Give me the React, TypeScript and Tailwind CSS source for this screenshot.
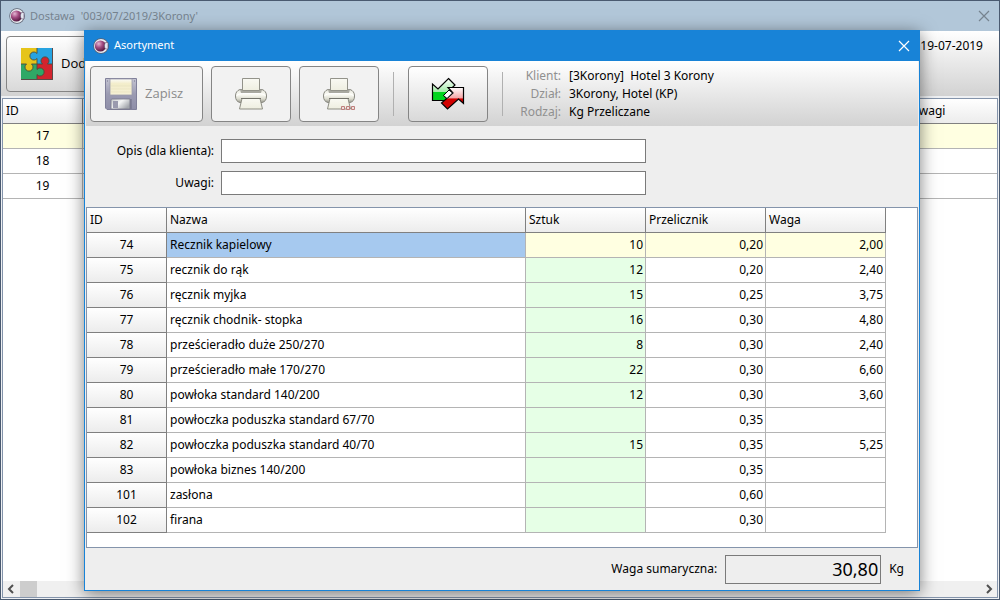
import { useState } from 'react'

interface Item {
  id: number
  name: string
  pieces: string
  factor: string
  weight: string
}

const ITEMS: Item[] = [
  { id: 74, name: 'Recznik kapielowy', pieces: '10', factor: '0,20', weight: '2,00' },
  { id: 75, name: 'recznik do rąk', pieces: '12', factor: '0,20', weight: '2,40' },
  { id: 76, name: 'ręcznik myjka', pieces: '15', factor: '0,25', weight: '3,75' },
  { id: 77, name: 'ręcznik chodnik- stopka', pieces: '16', factor: '0,30', weight: '4,80' },
  { id: 78, name: 'prześcieradło duże 250/270', pieces: '8', factor: '0,30', weight: '2,40' },
  { id: 79, name: 'prześcieradło małe 170/270', pieces: '22', factor: '0,30', weight: '6,60' },
  { id: 80, name: 'powłoka standard 140/200', pieces: '12', factor: '0,30', weight: '3,60' },
  { id: 81, name: 'powłoczka poduszka standard 67/70', pieces: '', factor: '0,35', weight: '' },
  { id: 82, name: 'powłoczka poduszka standard 40/70', pieces: '15', factor: '0,35', weight: '5,25' },
  { id: 83, name: 'powłoka biznes 140/200', pieces: '', factor: '0,35', weight: '' },
  { id: 101, name: 'zasłona', pieces: '', factor: '0,60', weight: '' },
  { id: 102, name: 'firana', pieces: '', factor: '0,30', weight: '' },
]

const DELIVERIES = [17, 18, 19]

const INFO = [
  ['Klient:', '[3Korony]  Hotel 3 Korony'],
  ['Dział:', '3Korony, Hotel (KP)'],
  ['Rodzaj:', 'Kg Przeliczane'],
]

const HEAD = 'h-[25px] border-r border-b border-[#808080] bg-linear-to-b from-white to-[#ececec] p-0 pl-[3px] text-left font-normal'
const ID_CELL = 'h-[25px] border-r border-b border-[#808080] bg-linear-to-b from-white to-[#ececec] p-0 text-center font-normal'
const CELL = 'h-[25px] border-r border-b border-[#b4b4b4] p-0'

function AppLogo() {
  return (
    <svg width="16" height="16" viewBox="0 0 16 16" aria-hidden="true">
      <defs>
        <radialGradient id="ball" cx="0.35" cy="0.3" r="0.75">
          <stop offset="0" stopColor="#e3b6d2" />
          <stop offset="0.45" stopColor="#a44d83" />
          <stop offset="1" stopColor="#4d1238" />
        </radialGradient>
      </defs>
      <circle cx="8" cy="8" r="7.7" fill="#5a5f6e" />
      <circle cx="8" cy="8" r="7" fill="#e9edf2" />
      <circle cx="7.4" cy="8" r="5.6" fill="url(#ball)" />
      <path d="M12.500 4.500h2.500v6.500h-2.500c-1.500-2-1.500-4.500 0-6.500z" fill="#e4e6f0" stroke="#5c4b68" strokeWidth="0.6" />
    </svg>
  )
}

function PuzzleIcon() {
  return (
    <svg width="32" height="32" viewBox="0 0 32 32" aria-hidden="true">
      <rect width="32" height="32" fill="#27a3e0" />
      <path d="M0 0H16V5.500A4 4 0 1 0 16 10.500V16H0z" fill="#e6c419" />
      <path d="M16 16H21.500A4 4 0 1 1 26.500 16H32V32H16z" fill="#d3242e" />
      <path d="M0 16H16V21.500A4 4 0 1 1 16 26.500V32H0z" fill="#2fa866" />
      <path d="M5.500 16A4 4 0 1 0 10.500 16z" fill="#e6c419" />
      <path
        d="M16 0V5.500A4 4 0 1 0 16 10.500V21.500A4 4 0 1 1 16 26.500V32M0 16H5.500A4 4 0 1 0 10.500 16H21.500A4 4 0 1 1 26.500 16H32"
        fill="none"
        stroke="#4b4a3c"
        strokeWidth="0.9"
      />
      <path d="M31.500 0V31.500H0" fill="none" stroke="#5b4a48" />
    </svg>
  )
}

function FloppyIcon() {
  return (
    <svg width="32" height="32" viewBox="0 0 32 32" aria-hidden="true">
      <defs>
        <linearGradient id="disk" x1="0" y1="0" x2="0" y2="1">
          <stop offset="0" stopColor="#c4c4d2" />
          <stop offset="0.5" stopColor="#9b9bb2" />
          <stop offset="1" stopColor="#8e8ea8" />
        </linearGradient>
        <linearGradient id="label" x1="0" y1="0" x2="0" y2="1">
          <stop offset="0" stopColor="#fbfbf8" />
          <stop offset="0.3" stopColor="#f3edca" />
          <stop offset="1" stopColor="#f6f1d6" />
        </linearGradient>
        <linearGradient id="shutter" x1="0" y1="0" x2="1" y2="0.6">
          <stop offset="0" stopColor="#c4c6c8" />
          <stop offset="0.5" stopColor="#f4f5f5" />
          <stop offset="1" stopColor="#a3a6ac" />
        </linearGradient>
      </defs>
      <path d="M.5.5h31v31H2L.5 30z" fill="url(#disk)" stroke="#80809a" />
      <rect x="5" y="1" width="22" height="16" fill="url(#label)" stroke="#9b9baa" strokeWidth="0.8" />
      <path d="M6 8h20M6 11h20M6 14h20" stroke="#e6dfbd" strokeWidth="0.6" />
      <path d="M2 3h1M29 3h1" stroke="#74748c" />
      <path d="M6 31V22q0-1 1-1h18v10z" fill="url(#shutter)" stroke="#777789" strokeWidth="0.8" />
      <rect x="8" y="23" width="5" height="7" fill="#9a9aae" />
      <path d="M26 21v10" stroke="#6f6f85" />
    </svg>
  )
}

function PrinterIcon({ dots = false }: { dots?: boolean }) {
  return (
    <svg width="32" height="32" viewBox="0 0 32 32" aria-hidden="true">
      <defs>
        <linearGradient id="printer" x1="0" y1="0" x2="0" y2="1">
          <stop offset="0" stopColor="#e6e6de" />
          <stop offset="0.4" stopColor="#fbfbf4" />
          <stop offset="0.7" stopColor="#deded2" />
          <stop offset="1" stopColor="#9c9c92" />
        </linearGradient>
        <linearGradient id="paper" x1="0" y1="0" x2="0" y2="1">
          <stop offset="0" stopColor="#f9f9f3" />
          <stop offset="1" stopColor="#eeeee0" />
        </linearGradient>
      </defs>
      <path d="M5 11.500H27Q31.500 13 31.500 18Q31.500 23.500 27 24.500H5Q.5 23.500 .5 18Q.5 13 5 11.500z" fill="url(#printer)" stroke="#87877f" />
      <path d="M5 11.500h22l-1 3.500H6z" fill="#a9a9a1" />
      <path d="M7.500.5h17v12h-17z" fill="url(#paper)" stroke="#93938a" />
      <path d="M1.500 17.500q3-2 6-2h17q3 0 6 2" fill="none" stroke="#fff" />
      <path d="M7 20.500h18l2.500 10.500h-23z" fill="url(#paper)" stroke="#8f8f85" />
      <path d="M6 20.500h20" stroke="#74746c" />
      {dots && (
        <path d="M18.500 28.500h3v3h-3zM23.500 28.500h3v3h-3zM28.500 28.500h3v3h-3z" fill="#eedfdd" stroke="#bd7f7c" />
      )}
    </svg>
  )
}

function SwapIcon() {
  return (
    <svg width="34" height="34" viewBox="0 0 34 34" aria-hidden="true">
      <defs>
        <linearGradient id="green" x1="0" y1="0" x2="0" y2="1">
          <stop offset="0" stopColor="#ffffff" />
          <stop offset="0.6" stopColor="#a2eca8" />
          <stop offset="0.62" stopColor="#00d51e" />
          <stop offset="1" stopColor="#00d51e" />
        </linearGradient>
        <linearGradient id="red" x1="0" y1="0" x2="0" y2="1">
          <stop offset="0" stopColor="#ffffff" />
          <stop offset="0.5" stopColor="#f4a3a3" />
          <stop offset="0.52" stopColor="#d10000" />
          <stop offset="1" stopColor="#d10000" />
        </linearGradient>
      </defs>
      <path d="M17.500 1.500l6.500 6.500L13 18.500l4.500 5H1.500V7l5.500 5z" fill="url(#green)" stroke="#000" strokeWidth="1.200" />
      <path d="M17 10.500h15.500v16l-5-4.500L16.500 32l-6-6 11.500-10z" fill="url(#red)" stroke="#000" strokeWidth="1.200" />
      <path d="M18 13l3.500 3-5.500 5.500-3.500-3z" fill="#fff" stroke="#000" />
    </svg>
  )
}

function CloseIcon() {
  return (
    <svg width="12" height="12" viewBox="0 0 12 12" fill="none" stroke="currentColor" strokeWidth="1.200" aria-hidden="true">
      <path d="M1 1l10 10M11 1L1 11" />
    </svg>
  )
}

function DeliveryWindow() {
  return (
    <div className="flex min-h-screen flex-col border border-[#4a5a70] bg-[#eef0f3]">
      <header className="flex h-[30px] items-center justify-between bg-[#b2c7d9] pr-[9px] pl-2 text-[#76838f]">
        <div className="flex items-center gap-[5px] font-['Noto_Sans',sans-serif] text-[11px]">
          <AppLogo />
          <h1 className="whitespace-pre">Dostawa  '003/07/2019/3Korony'</h1>
        </div>
        <button aria-label="Zamknij okno dostawy"><CloseIcon /></button>
      </header>
      <div className="flex h-[65px] items-start justify-between bg-linear-to-b from-white to-[#d2d2d2] pt-[5px] pr-4 pl-[5px]">
        <button className="flex h-14 w-32 items-center gap-2 rounded-sm border border-[#858585] bg-linear-to-b from-white to-[#d9d9d9] pl-[14px] font-['Open_Sans',sans-serif] text-[13px]">
          <PuzzleIcon />
          Dodaj
        </button>
        <p className="pt-px leading-[18px]">Data: 19-07-2019</p>
      </div>
      <div className="mx-px mt-0.5 mb-px flex flex-1 flex-col border border-[#8494ab] bg-white">
        <table className="w-full table-fixed border-separate border-spacing-0">
          <thead>
            <tr>
              <th className={`${HEAD} w-20`}>ID</th>
              <th className={HEAD}>Asortyment</th>
              <th className={`${HEAD} w-[90px] border-r-0`}>Uwagi</th>
            </tr>
          </thead>
          <tbody>
            {DELIVERIES.map((id, i) => (
              <tr key={id} className={i === 0 ? 'bg-[#ffffe1]' : 'bg-white'}>
                <td className={`${CELL} text-center`}>{id}</td>
                <td className={CELL} />
                <td className={`${CELL} border-r-0`} />
              </tr>
            ))}
          </tbody>
        </table>
        <div className="mt-auto flex h-4 items-center justify-between bg-[#f0f0f0] px-1 text-[#505050]">
          <div className="flex h-full items-center gap-[5px]">
            <svg width="8" height="10" viewBox="0 0 8 10" fill="none" stroke="currentColor" strokeWidth="2" aria-hidden="true"><path d="M6 1L2 5l4 4" /></svg>
            <div className="h-full w-[17px] bg-[#cdcdcd]" />
          </div>
          <svg width="8" height="10" viewBox="0 0 8 10" fill="none" stroke="currentColor" strokeWidth="2" aria-hidden="true"><path d="M2 1l4 4-4 4" /></svg>
        </div>
      </div>
    </div>
  )
}

function AssortmentDialog() {
  const [description, setDescription] = useState('')
  const [notes, setNotes] = useState('')
  const [selected, setSelected] = useState(74)

  return (
    <div
      role="dialog"
      aria-labelledby="dialog-title"
      className="absolute top-[30px] right-20 left-[84px] border border-t-0 border-[#1883d7] bg-[#eeeeee] shadow-[0_3px_16px_rgba(0,0,0,0.5)]"
    >
      <header className="flex h-[31px] items-center justify-between bg-[#1883d7] pr-[9px] pl-2 text-white">
        <div className="flex items-center gap-[5px] font-['Noto_Sans',sans-serif] text-[11px]">
          <AppLogo />
          <h2 id="dialog-title">Asortyment</h2>
        </div>
        <button aria-label="Zamknij"><CloseIcon /></button>
      </header>

      <div className="mx-px flex h-[65px] items-start bg-linear-to-b from-white to-[#d2d2d2] pt-[5px] pl-1">
        <button disabled className="flex h-14 w-[113px] items-center gap-2 rounded-sm border border-[#858585] bg-[#f2f2f2] pl-[14px] font-['Open_Sans',sans-serif] text-[13px] text-[#8b8b8b]">
          <FloppyIcon />
          Zapisz
        </button>
        <button disabled aria-label="Drukuj" className="ml-2 flex h-14 w-20 items-center justify-center rounded-sm border border-[#858585] bg-[#f2f2f2]">
          <PrinterIcon />
        </button>
        <button disabled aria-label="Drukuj z opcjami" className="ml-2 flex h-14 w-20 items-center justify-center rounded-sm border border-[#858585] bg-[#f2f2f2]">
          <PrinterIcon dots />
        </button>
        <div className="mt-1.5 ml-[14px] h-11 w-px bg-[#b0b0b0]" />
        <button aria-label="Zamień" className="ml-[14px] flex h-14 w-20 items-center justify-center rounded-sm border border-[#858585] bg-linear-to-b from-white to-[#d9d9d9]">
          <SwapIcon />
        </button>
        <div className="mt-1.5 ml-[14px] h-11 w-px bg-[#b0b0b0]" />
        <dl className="ml-3 grid grid-cols-[46px_auto] gap-x-2 pt-px leading-[18px]">
          {INFO.map(([label, value]) => (
            <div key={label} className="contents">
              <dt className="text-right text-[#909090]">{label}</dt>
              <dd className="whitespace-pre">{value}</dd>
            </div>
          ))}
        </dl>
      </div>

      <form className="grid grid-cols-[129px_425px] items-center gap-x-[7px] gap-y-2 pt-[13px] pb-3">
        <label htmlFor="description" className="text-right">Opis (dla klienta):</label>
        <input
          id="description"
          value={description}
          onChange={(e) => setDescription(e.target.value)}
          className="h-6 border border-[#7a7a7a] bg-white px-1"
        />
        <label htmlFor="notes" className="text-right">Uwagi:</label>
        <input
          id="notes"
          value={notes}
          onChange={(e) => setNotes(e.target.value)}
          className="h-6 border border-[#7a7a7a] bg-white px-1"
        />
      </form>

      <div className="mx-px border border-[#8494ab] bg-white pb-[14px]">
        <table className="w-[799px] table-fixed border-separate border-spacing-0">
          <thead>
            <tr>
              <th className={`${HEAD} w-20`}>ID</th>
              <th className={HEAD}>Nazwa</th>
              <th className={`${HEAD} w-[120px]`}>Sztuk</th>
              <th className={`${HEAD} w-[120px]`}>Przelicznik</th>
              <th className={`${HEAD} w-[120px]`}>Waga</th>
            </tr>
          </thead>
          <tbody>
            {ITEMS.map((item) => {
              const active = item.id === selected
              const bg = active ? 'bg-[#ffffe1]' : 'bg-white'
              return (
                <tr key={item.id} onClick={() => setSelected(item.id)}>
                  <th scope="row" className={ID_CELL}>{item.id}</th>
                  <td className={`${CELL} pl-[3px] ${active ? 'bg-[#a6c9ef]' : 'bg-white'}`}>{item.name}</td>
                  <td className={`${CELL} pr-0.5 text-right ${active ? 'bg-[#ffffe1]' : 'bg-[#e6ffe6]'}`}>{item.pieces}</td>
                  <td className={`${CELL} pr-0.5 text-right ${bg}`}>{item.factor}</td>
                  <td className={`${CELL} pr-0.5 text-right ${bg}`}>{item.weight}</td>
                </tr>
              )
            })}
          </tbody>
        </table>
      </div>

      <footer className="flex h-[42px] items-center justify-end pr-[15px]">
        <label htmlFor="total">Waga sumaryczna:</label>
        <input
          id="total"
          readOnly
          value="30,80"
          className="mr-2 ml-2 h-[29px] w-[156px] border border-[#7a7a7a] bg-[#eeeeee] px-0.5 text-right text-[18px]"
        />
        <span>Kg</span>
      </footer>
    </div>
  )
}

export default function App() {
  return (
    <div className="relative min-h-screen font-['Noto_Sans','DejaVu_Sans',sans-serif] text-[12px] text-black">
      <DeliveryWindow />
      <AssortmentDialog />
    </div>
  )
}
